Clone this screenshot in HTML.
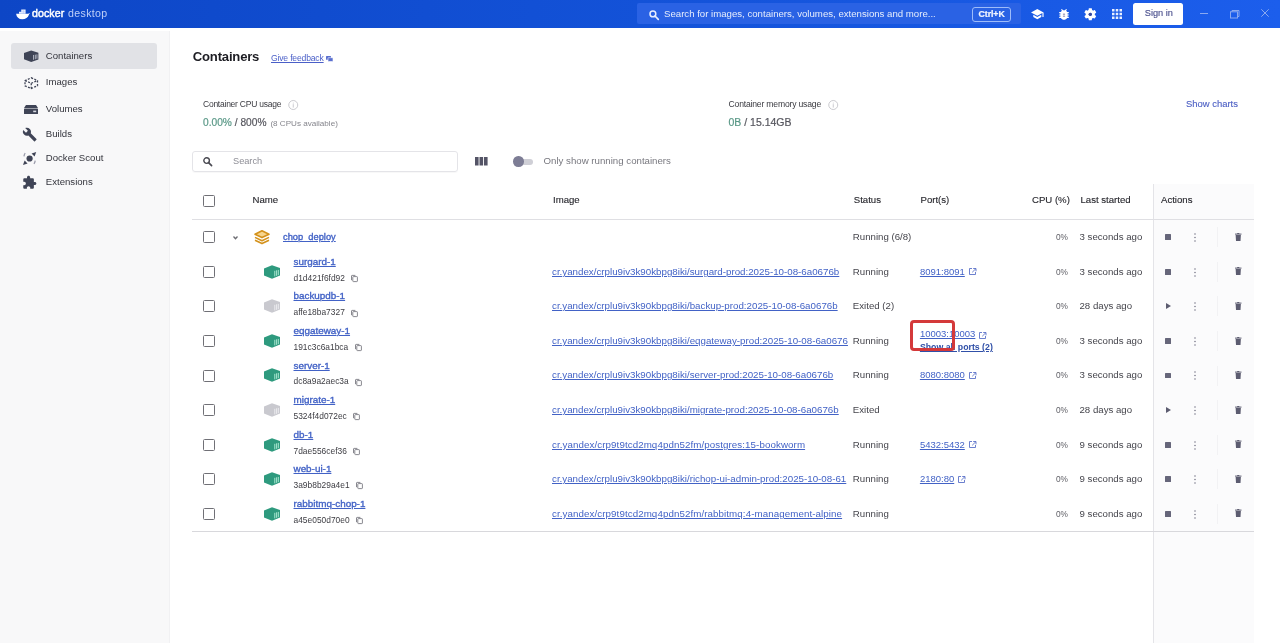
<!DOCTYPE html><html><head><meta charset="utf-8"><title>Docker Desktop</title><style>
*{box-sizing:border-box;margin:0;padding:0}
html,body{width:1280px;height:643px;overflow:hidden;background:#fff;font-family:"Liberation Sans",sans-serif;color:#17171c}
#root{position:absolute;left:0;top:0;width:1280px;height:643px;overflow:hidden;will-change:transform}
.t{position:absolute;white-space:nowrap}
.a{position:absolute}
svg{position:absolute;overflow:visible}
#top{position:absolute;left:0;top:0;width:1280px;height:28px;background:linear-gradient(90deg,#0d46c6 0%,#1352d8 50%,#1c5eec 100%)}
#side{position:absolute;left:0;top:31px;width:170px;height:612px;background:#f8f8f9;border-right:1px solid #f1f1f3}
.sel{position:absolute;left:11px;top:43px;width:146px;height:26px;border-radius:3px;background:#e1e2e6}
.lnk{color:#4262c6;text-decoration:underline;text-decoration-thickness:1px;text-underline-offset:1px}
.med{-webkit-text-stroke:0.12px currentColor}
.bld{-webkit-text-stroke:0.35px currentColor}
.cb{position:absolute;left:203px;width:12px;height:12px;border:1.2px solid #707076;border-radius:1.5px}
</style></head><body><div id="root">
<div id="top"></div>
<svg style="left:16px;top:8.5px" width="14" height="10.5" viewBox="0 0 14 10.5"><path d="M0.1 4.8 H12.4 C12.9 4.1 13.5 3.9 14 4.1 C13.5 4.6 13.2 5.2 12.9 5.8 C12 8.7 9.6 10.3 6.2 10.3 C2.8 10.3 0.6 8.4 0.1 4.8 Z" fill="#fff"/><path d="M3 4.8 V2.8 H5.2 V0.6 H9.6 V4.8 Z" fill="#e6eeff"/><path d="M5.2 2.8 H9.6 M7.4 0.6 V4.8" stroke="#9fb8f0" stroke-width="0.35"/></svg>
<div class="t" style="left:32.00px;top:8.00px;font-size:10.6px;line-height:10.6px;color:#fff;letter-spacing:0.08px;-webkit-text-stroke:0.45px #fff">docker</div>
<div class="t" style="left:68.00px;top:8.00px;font-size:10.6px;line-height:10.6px;color:#bfd0f8;letter-spacing:0.35px">desktop</div>
<div class="a" style="left:637px;top:3px;width:384px;height:21px;background:#2a62e4;border-radius:2px"></div>
<svg style="left:649px;top:10px" width="10" height="10" viewBox="0 0 10 10"><circle cx="3.9" cy="3.9" r="2.9" fill="none" stroke="#e8efff" stroke-width="1.5"/><path d="M6 6 L9.3 9.3" stroke="#e8efff" stroke-width="1.7" stroke-linecap="round"/></svg>
<div class="t" style="left:664.00px;top:9.00px;font-size:9.63px;line-height:9.63px;color:#e6edfc">Search for images, containers, volumes, extensions and more...</div>
<div class="a" style="left:972px;top:6.5px;width:39px;height:15px;border:1.4px solid #9dbcfa;border-radius:3px"></div>
<div class="t" style="left:978.60px;top:10.00px;font-size:8.8px;line-height:8.8px;font-weight:bold;color:#f2f6ff;letter-spacing:-0.1px;-webkit-text-stroke:0.2px #f2f6ff">Ctrl+K</div>
<svg style="left:1031px;top:8.5px" width="12.6" height="10.4" viewBox="1 3 22 18.2"><path fill="#fff" d="M5 13.18v4L12 21l7-3.82v-4L12 17l-7-3.82zM12 3L1 9l11 6 9-4.91V17h2V9L12 3z"/></svg>
<svg style="left:1058.5px;top:8.8px" width="10" height="10.8" viewBox="4 3 16 18"><path fill="#fff" d="M20 8h-2.81c-.45-.78-1.07-1.45-1.82-1.96L17 4.41 15.59 3l-2.17 2.17C12.96 5.06 12.49 5 12 5c-.49 0-.96.06-1.41.17L8.41 3 7 4.41l1.62 1.630C7.880 6.55 7.26 7.22 6.81 8H4v2h2.09c-.05.33-.09.66-.09 1v1H4v2h2v1c0 .34.04.67.09 1H4v2h2.81c1.04 1.79 2.970 3 5.19 3s4.15-1.21 5.19-3H20v-2h-2.09c.05-.33.09-.66.09-1v-1h2v-2h-2v-1c0-.34-.04-.67-.09-1H20V8z"/><path fill="#5a5a8a" d="M10.2 14.2h3.6v1.3h-3.6zM10.2 10.8h3.6v1.3h-3.6z"/></svg>
<svg style="left:1084.2px;top:7.6px" width="12.6" height="12.6" viewBox="2 2 20 20"><path fill="#fff" d="M19.14 12.94c.04-.3.06-.61.06-.94 0-.32-.02-.64-.07-.94l2.030-1.58c.18-.14.23-.41.12-.61l-1.92-3.32c-.12-.22-.37-.29-.59-.22l-2.39.96c-.5-.38-1.03-.7-1.62-.94l-.36-2.54c-.04-.24-.24-.41-.48-.41h-3.84c-.24 0-.43.17-.47.41l-.36 2.54c-.59.24-1.13.57-1.62.94l-2.39-.96c-.22-.08-.47 0-.59.22L2.74 8.87c-.12.21-.08.47.12.61l2.03 1.58c-.05.3-.09.63-.09.94s.02.64.07.94l-2.03 1.58c-.18.14-.23.41-.12.61l1.92 3.32c.12.22.37.29.59.22l2.39-.96c.5.38 1.03.7 1.62.94l.36 2.54c.05.24.24.41.48.41h3.84c.24 0 .44-.17.47-.41l.36-2.54c.59-.24 1.13-.56 1.62-.94l2.39.96c.22.08.47 0 .59-.22l1.92-3.32c.12-.22.07-.47-.12-.61l-2.01-1.58zM12 14.6c-1.43 0-2.6-1.17-2.6-2.6s1.17-2.6 2.6-2.6 2.6 1.17 2.6 2.6-1.17 2.6-2.6 2.6z"/><circle cx="12" cy="12" r="2.6" fill="#3a4a9a"/></svg>
<svg style="left:1112.2px;top:8.8px" width="10" height="10" viewBox="4 4 16 16"><path fill="#e8efff" d="M4 8h4V4H4v4zm6 12h4v-4h-4v4zm-6 0h4v-4H4v4zm0-6h4v-4H4v4zm6 0h4v-4h-4v4zm6-10v4h4V4h-4zm-6 4h4V4h-4v4zm6 6h4v-4h-4v4zm0 6h4v-4h-4v4z"/></svg>
<div class="a" style="left:1133px;top:3px;width:50px;height:21.5px;background:#fff;border-radius:2.5px"></div>
<div class="t" style="left:1144.80px;top:9.00px;font-size:9.2px;line-height:9.2px;color:#4d528f;-webkit-text-stroke:0.15px #4d528f">Sign in</div>
<div class="a" style="left:1200px;top:13px;width:7.5px;height:1px;background:#8aa9f0"></div>
<svg style="left:1230px;top:9.5px" width="9.5" height="8.5" viewBox="0 0 9.5 8.5"><rect x="0.5" y="1.8" width="7" height="6.2" fill="none" stroke="#8aa9f0" stroke-width="1"/><path d="M2 1.8 V0.5 H9 V6.5 H7.5" fill="none" stroke="#8aa9f0" stroke-width="1"/></svg>
<svg style="left:1261px;top:9px" width="8" height="8" viewBox="0 0 8 8"><path d="M0.3 0.3 L7.7 7.7 M7.7 0.3 L0.3 7.7" stroke="#8aa9f0" stroke-width="1"/></svg>
<div id="side"></div>
<div class="sel"></div>
<div class="t" style="left:45.80px;top:51.00px;font-size:9.6px;line-height:9.6px;color:#33343c">Containers</div>
<div class="t" style="left:45.80px;top:77.00px;font-size:9.6px;line-height:9.6px;color:#33343c">Images</div>
<div class="t" style="left:45.80px;top:104.00px;font-size:9.6px;line-height:9.6px;color:#33343c">Volumes</div>
<div class="t" style="left:45.80px;top:129.00px;font-size:9.6px;line-height:9.6px;color:#33343c">Builds</div>
<div class="t" style="left:45.80px;top:153.00px;font-size:9.6px;line-height:9.6px;color:#33343c">Docker Scout</div>
<div class="t" style="left:45.80px;top:177.00px;font-size:9.6px;line-height:9.6px;color:#33343c">Extensions</div>
<svg style="left:23.6px;top:50px" width="14.4" height="12" viewBox="0 0 16 13.3"><path d="M0 3.4 L8 0.4 L16 3 V10.5 L8 13.3 L0 10.4 Z" fill="#3f4456"/><path d="M10.6 5.5 V10.8 M12.6 5.2 V10.2 M14.4 4.8 V9.7" stroke="#c8cbd6" stroke-width="0.9"/></svg>
<svg style="left:23.6px;top:76.5px" width="14.5" height="12.2" viewBox="0 0 14.5 12.2"><path d="M7.25 0.8 L13.5 3.6 V8.8 L7.25 11.5 L1 8.8 V3.6 Z M1 3.6 L7.25 6.3 L13.5 3.6 M7.25 6.3 V11.5" fill="none" stroke="#3f4456" stroke-width="1.3" stroke-dasharray="2 1.4"/></svg>
<svg style="left:23.6px;top:104.7px" width="14" height="9" viewBox="0 0 14 9"><path d="M2 0 H12 L14 3 H0 Z" fill="#3f4456"/><rect x="0" y="3.6" width="14" height="5.4" rx="0.6" fill="#3f4456"/><rect x="9.2" y="5.6" width="3" height="1.6" fill="#d8dae2"/></svg>
<svg style="left:21.5px;top:127px" width="15.5" height="15" viewBox="0 0 24 24"><path fill="#3f4456" d="M22.7 19l-9.1-9.1c.9-2.3.4-5-1.5-6.9-2-2-5-2.4-7.4-1.3L9 6 6 9 1.6 4.7C.4 7.1.9 10.1 2.9 12.1c1.9 1.9 4.6 2.4 6.9 1.5l9.1 9.1c.4.4 1 .4 1.4 0l2.3-2.3c.5-.4.5-1.1.1-1.4z"/></svg>
<svg style="left:22.7px;top:152px" width="13.2" height="13" viewBox="0 0 13.2 13"><circle cx="6.6" cy="6.5" r="3.1" fill="#3f4456"/><path d="M13.2 0 L8.6 1.6 L11.6 4.6 Z" fill="#3f4456"/><path d="M0 13 L4.6 11.4 L1.6 8.4 Z" fill="#3f4456"/><path d="M2.2 1.2 A6 6 0 0 0 1 4.4" stroke="#9a9cab" stroke-width="1.3" fill="none"/><path d="M11 11.8 A6 6 0 0 0 12.2 8.6" stroke="#9a9cab" stroke-width="1.3" fill="none"/></svg>
<svg style="left:22px;top:174.5px" width="15" height="15" viewBox="0 0 24 24"><path fill="#3f4456" d="M20.5 11H19V7c0-1.1-.9-2-2-2h-4V3.5C13 2.12 11.88 1 10.5 1S8 2.12 8 3.5V5H4c-1.1 0-1.99.9-1.99 2v3.8H3.5c1.49 0 2.7 1.21 2.7 2.7s-1.21 2.7-2.7 2.7H2V20c0 1.1.9 2 2 2h3.8v-1.5c0-1.49 1.21-2.7 2.7-2.7 1.49 0 2.7 1.21 2.7 2.7V22H17c1.1 0 2-.9 2-2v-4h1.5c1.38 0 2.5-1.12 2.5-2.5S21.88 11 20.5 11z"/></svg>
<div class="t" style="left:192.80px;top:50.00px;font-size:13.1px;line-height:13.1px;font-weight:bold;color:#1c1c22;letter-spacing:-0.2px">Containers</div>
<div class="t" style="left:271.00px;top:54.00px;font-size:8.6px;line-height:8.6px;color:#4a5fc8;letter-spacing:-0.18px;text-decoration:underline;text-underline-offset:0.5px">Give feedback</div>
<svg style="left:326px;top:55.5px" width="7" height="5.5" viewBox="0 0 7 5.5"><rect x="0" y="0" width="5" height="3.8" rx="0.5" fill="#5a6fcf"/><rect x="2" y="1.7" width="5" height="3.8" rx="0.5" fill="#5a6fcf" stroke="#fff" stroke-width="0.6"/></svg>
<div class="t" style="left:203.00px;top:100.00px;font-size:8.5px;line-height:8.5px;color:#3a3a40;letter-spacing:-0.24px">Container CPU usage</div>
<svg style="left:288px;top:100px" width="10.5" height="10" viewBox="0 0 10.5 10"><circle cx="5.25" cy="5" r="4.5" fill="none" stroke="#c4c4ca" stroke-width="0.9"/><path d="M5.25 4.2 V7.6" stroke="#c4c4ca" stroke-width="0.9"/><circle cx="5.25" cy="2.9" r="0.5" fill="#c4c4ca"/></svg>
<div class="t" style="left:203.00px;top:118.00px;font-size:10.2px;line-height:10.2px;color:#56565e;-webkit-text-stroke:0.2px currentColor"><span style="color:#5a9887">0.00%</span> / 800%</div>
<div class="t" style="left:270.40px;top:120.00px;font-size:8.1px;line-height:8.1px;color:#85858c">(8 CPUs available)</div>
<div class="t" style="left:728.50px;top:100.00px;font-size:8.6px;line-height:8.6px;color:#3a3a40;letter-spacing:-0.18px">Container memory usage</div>
<svg style="left:828px;top:99.5px" width="10.5" height="10" viewBox="0 0 10.5 10"><circle cx="5.25" cy="5" r="4.5" fill="none" stroke="#c4c4ca" stroke-width="0.9"/><path d="M5.25 4.2 V7.6" stroke="#c4c4ca" stroke-width="0.9"/><circle cx="5.25" cy="2.9" r="0.5" fill="#c4c4ca"/></svg>
<div class="t" style="left:728.50px;top:117.00px;font-size:10.5px;line-height:10.5px;color:#56565e;-webkit-text-stroke:0.2px currentColor"><span style="color:#5a9887">0B</span> / 15.14GB</div>
<div class="a t med" style="left:1186.00px;top:99.00px;font-size:9.45px;line-height:9.45px;color:#4d60c4">Show charts</div>
<div class="a" style="left:192px;top:150.5px;width:266px;height:21.5px;border:1px solid #e4e4e8;border-radius:3px;box-shadow:0 1px 1px rgba(0,0,0,0.03)"></div>
<svg style="left:203px;top:157px" width="10" height="9" viewBox="0 0 10 9"><circle cx="3.6" cy="3.6" r="2.8" fill="none" stroke="#4a4a52" stroke-width="1.4"/><path d="M5.6 5.6 L8.6 8.6" stroke="#4a4a52" stroke-width="1.6" stroke-linecap="round"/></svg>
<div class="t" style="left:233.00px;top:157.00px;font-size:9.2px;line-height:9.2px;color:#8d8d95">Search</div>
<svg style="left:475.4px;top:157.2px" width="12.6" height="8.5" viewBox="0 0 12.6 8.5"><rect x="0" y="0" width="3.6" height="8.5" fill="#545466"/><rect x="4.5" y="0" width="3.6" height="8.5" fill="#545466"/><rect x="9" y="0" width="3.6" height="8.5" fill="#545466"/></svg>
<div class="a" style="left:515px;top:158.5px;width:18px;height:6px;border-radius:3px;background:#cfcfd6"></div>
<div class="a" style="left:513.4px;top:156.3px;width:10.4px;height:10.4px;border-radius:50%;background:#7d7d95"></div>
<div class="t" style="left:543.50px;top:156.00px;font-size:9.68px;line-height:9.68px;color:#78787f">Only show running containers</div>
<div class="a" style="left:1153px;top:184px;width:101px;height:459px;background:#fbfbfc;border-left:1px solid #e4e4e8"></div>
<div class="a" style="left:192px;top:219px;width:1062px;height:1px;background:#dfdfe3"></div>
<div class="a" style="left:192px;top:531px;width:1062px;height:1px;background:#d8d8dc"></div>
<div class="cb" style="top:194.7px"></div>
<div class="a t med" style="left:252.60px;top:195.00px;font-size:9.6px;line-height:9.6px;color:#26262c">Name</div>
<div class="a t med" style="left:553.00px;top:195.00px;font-size:9.6px;line-height:9.6px;color:#26262c">Image</div>
<div class="a t med" style="left:853.80px;top:195.00px;font-size:9.6px;line-height:9.6px;color:#26262c">Status</div>
<div class="a t med" style="left:920.50px;top:195.00px;font-size:9.6px;line-height:9.6px;color:#26262c">Port(s)</div>
<div class="a t med" style="left:1032.00px;top:195.00px;font-size:9.6px;line-height:9.6px;color:#26262c">CPU (%)</div>
<div class="a t med" style="left:1080.50px;top:195.00px;font-size:9.6px;line-height:9.6px;color:#26262c">Last started</div>
<div class="a t med" style="left:1161.00px;top:195.00px;font-size:9.6px;line-height:9.6px;color:#26262c">Actions</div>
<div class="cb" style="top:231.28px"></div>
<svg style="left:233px;top:235.59px" width="5" height="3.4" viewBox="0 0 5 3.4"><path d="M0.5 0.5 L2.5 2.7 L4.5 0.5" fill="none" stroke="#6c6c72" stroke-width="1.3"/></svg>
<svg style="left:253.5px;top:229.59px" width="16" height="14.2" viewBox="0 0 16 14.2"><path d="M8 0.8 L15 4.2 L8 7.6 L1 4.2 Z" fill="#f7d58d" stroke="#d4921c" stroke-width="1.6" stroke-linejoin="round"/><path d="M1 7.4 L8 10.8 L15 7.4" fill="none" stroke="#d4921c" stroke-width="1.6" stroke-linejoin="round"/><path d="M1 10.3 L8 13.6 L15 10.3" fill="none" stroke="#d4921c" stroke-width="1.6" stroke-linejoin="round"/></svg>
<div class="a t lnk bld" style="left:283.00px;top:233.00px;font-size:9.3px;line-height:9.3px;">chop_deploy</div>
<div class="t" style="left:852.80px;top:232.00px;font-size:9.66px;line-height:9.66px;color:#45454c">Running (6/8)</div>
<div class="t" style="left:1056.20px;top:232.00px;font-size:9.66px;line-height:9.66px;color:#5e5e65;transform:scaleX(0.86);transform-origin:0 0">0%</div>
<div class="t" style="left:1079.50px;top:232.00px;font-size:9.66px;line-height:9.66px;color:#45454c">3 seconds ago</div>
<div class="a" style="left:1165.2px;top:234.48px;width:5.6px;height:5.6px;background:#66667a;border-radius:0.5px"></div>
<svg style="left:1193.6px;top:233.09px" width="2" height="9" viewBox="0 0 2 9"><circle cx="1" cy="1" r="0.75" fill="#707082"/><circle cx="1" cy="4.5" r="0.75" fill="#707082"/><circle cx="1" cy="8" r="0.75" fill="#707082"/></svg>
<div class="a" style="left:1216.5px;top:227.28px;width:1px;height:20px;background:#f2f2f4"></div>
<svg style="left:1235px;top:232.88px" width="6.5" height="8" viewBox="0 0 6.5 8"><rect x="0" y="0.6" width="6.5" height="1" fill="#5c5c70"/><rect x="2.2" y="0" width="2.1" height="1" fill="#5c5c70"/><path d="M0.6 2 H5.9 L5.5 8 H1 Z" fill="#5c5c70"/></svg>
<div class="cb" style="top:265.86px"></div>
<svg style="left:264px;top:264.75px" width="16" height="14" viewBox="0 0 16 14"><path d="M0 3.4 L8 0.2 L16 3 V10.6 L8 13.8 L0 10.6 Z" fill="#2e9a7e"/><path d="M10.8 5.8 V11.4 M12.6 5.3 V10.8 M14.3 4.9 V10.2" stroke="#b6efd9" stroke-width="0.9"/></svg>
<div class="a t lnk bld" style="left:293.50px;top:257.00px;font-size:9.9px;line-height:9.9px;">surgard-1</div>
<div class="t" style="left:293.50px;top:274.00px;font-size:8.4px;line-height:8.4px;color:#3c3c42;letter-spacing:0.02px">d1d421f6fd92</div>
<svg style="left:351.32px;top:275.06px" width="7" height="7" viewBox="0 0 7 7"><rect x="1.8" y="1.6" width="4.6" height="5" rx="0.6" fill="none" stroke="#7b7b82" stroke-width="0.9"/><path d="M0.5 5.2 V1 Q0.5 0.4 1.1 0.4 H4.4" fill="none" stroke="#7b7b82" stroke-width="0.9"/></svg>
<div class="a t lnk" style="left:552.00px;top:267.00px;font-size:9.76px;line-height:9.76px;width:296px;overflow:hidden">cr.yandex/crplu9iv3k90kbpg8iki/surgard-prod:2025-10-08-6a0676b</div>
<div class="t" style="left:852.80px;top:267.00px;font-size:9.66px;line-height:9.66px;color:#45454c">Running</div>
<div class="a t lnk" style="left:919.90px;top:267.00px;font-size:9.5px;line-height:9.5px;">8091:8091</div>
<svg style="left:968.81px;top:268.36px" width="7.5" height="7" viewBox="0 0 7.5 7"><path d="M3 0.5 H0.5 V6.5 H6.5 V4" fill="none" stroke="#5b72c8" stroke-width="0.9"/><path d="M4.2 0.5 H7 V3.3 M7 0.5 L3.2 4.3" fill="none" stroke="#5b72c8" stroke-width="0.9"/></svg>
<div class="t" style="left:1056.20px;top:267.00px;font-size:9.66px;line-height:9.66px;color:#5e5e65;transform:scaleX(0.86);transform-origin:0 0">0%</div>
<div class="t" style="left:1079.50px;top:267.00px;font-size:9.66px;line-height:9.66px;color:#45454c">3 seconds ago</div>
<div class="a" style="left:1165.2px;top:269.06px;width:5.6px;height:5.6px;background:#66667a;border-radius:0.5px"></div>
<svg style="left:1193.6px;top:267.66px" width="2" height="9" viewBox="0 0 2 9"><circle cx="1" cy="1" r="0.75" fill="#707082"/><circle cx="1" cy="4.5" r="0.75" fill="#707082"/><circle cx="1" cy="8" r="0.75" fill="#707082"/></svg>
<div class="a" style="left:1216.5px;top:261.86px;width:1px;height:20px;background:#f2f2f4"></div>
<svg style="left:1235px;top:267.46px" width="6.5" height="8" viewBox="0 0 6.5 8"><rect x="0" y="0.6" width="6.5" height="1" fill="#5c5c70"/><rect x="2.2" y="0" width="2.1" height="1" fill="#5c5c70"/><path d="M0.6 2 H5.9 L5.5 8 H1 Z" fill="#5c5c70"/></svg>
<div class="cb" style="top:300.43px"></div>
<svg style="left:264px;top:299.32px" width="16" height="14" viewBox="0 0 16 14"><path d="M0 3.4 L8 0.2 L16 3 V10.6 L8 13.8 L0 10.6 Z" fill="#c9c9cf"/><path d="M10.8 5.8 V11.4 M12.6 5.3 V10.8 M14.3 4.9 V10.2" stroke="#f0f0f3" stroke-width="0.9"/></svg>
<div class="a t lnk bld" style="left:293.50px;top:291.00px;font-size:9.9px;line-height:9.9px;">backupdb-1</div>
<div class="t" style="left:293.50px;top:308.00px;font-size:8.4px;line-height:8.4px;color:#3c3c42;letter-spacing:0.02px">affe18ba7327</div>
<svg style="left:351.17px;top:309.62px" width="7" height="7" viewBox="0 0 7 7"><rect x="1.8" y="1.6" width="4.6" height="5" rx="0.6" fill="none" stroke="#7b7b82" stroke-width="0.9"/><path d="M0.5 5.2 V1 Q0.5 0.4 1.1 0.4 H4.4" fill="none" stroke="#7b7b82" stroke-width="0.9"/></svg>
<div class="a t lnk" style="left:552.00px;top:301.00px;font-size:9.76px;line-height:9.76px;width:296px;overflow:hidden">cr.yandex/crplu9iv3k90kbpg8iki/backup-prod:2025-10-08-6a0676b</div>
<div class="t" style="left:852.80px;top:301.00px;font-size:9.66px;line-height:9.66px;color:#45454c">Exited (2)</div>
<div class="t" style="left:1056.20px;top:301.00px;font-size:9.66px;line-height:9.66px;color:#5e5e65;transform:scaleX(0.86);transform-origin:0 0">0%</div>
<div class="t" style="left:1079.50px;top:301.00px;font-size:9.66px;line-height:9.66px;color:#45454c">28 days ago</div>
<svg style="left:1166px;top:303.43px" width="5" height="6" viewBox="0 0 5 6"><path d="M0 0 L5 3 L0 6 Z" fill="#5c5c70"/></svg>
<svg style="left:1193.6px;top:302.23px" width="2" height="9" viewBox="0 0 2 9"><circle cx="1" cy="1" r="0.75" fill="#707082"/><circle cx="1" cy="4.5" r="0.75" fill="#707082"/><circle cx="1" cy="8" r="0.75" fill="#707082"/></svg>
<div class="a" style="left:1216.5px;top:296.43px;width:1px;height:20px;background:#f2f2f4"></div>
<svg style="left:1235px;top:302.03px" width="6.5" height="8" viewBox="0 0 6.5 8"><rect x="0" y="0.6" width="6.5" height="1" fill="#5c5c70"/><rect x="2.2" y="0" width="2.1" height="1" fill="#5c5c70"/><path d="M0.6 2 H5.9 L5.5 8 H1 Z" fill="#5c5c70"/></svg>
<div class="cb" style="top:335.00px"></div>
<svg style="left:264px;top:333.9px" width="16" height="14" viewBox="0 0 16 14"><path d="M0 3.4 L8 0.2 L16 3 V10.6 L8 13.8 L0 10.6 Z" fill="#2e9a7e"/><path d="M10.8 5.8 V11.4 M12.6 5.3 V10.8 M14.3 4.9 V10.2" stroke="#b6efd9" stroke-width="0.9"/></svg>
<div class="a t lnk bld" style="left:293.50px;top:326.00px;font-size:9.9px;line-height:9.9px;">eqgateway-1</div>
<div class="t" style="left:293.50px;top:343.00px;font-size:8.4px;line-height:8.4px;color:#3c3c42;letter-spacing:0.02px">191c3c6a1bca</div>
<svg style="left:354.59px;top:344.2px" width="7" height="7" viewBox="0 0 7 7"><rect x="1.8" y="1.6" width="4.6" height="5" rx="0.6" fill="none" stroke="#7b7b82" stroke-width="0.9"/><path d="M0.5 5.2 V1 Q0.5 0.4 1.1 0.4 H4.4" fill="none" stroke="#7b7b82" stroke-width="0.9"/></svg>
<div class="a t lnk" style="left:552.00px;top:336.00px;font-size:9.76px;line-height:9.76px;width:296px;overflow:hidden">cr.yandex/crplu9iv3k90kbpg8iki/eqgateway-prod:2025-10-08-6a0676</div>
<div class="t" style="left:852.80px;top:336.00px;font-size:9.66px;line-height:9.66px;color:#45454c">Running</div>
<div class="a t lnk" style="left:919.90px;top:329.00px;font-size:9.5px;line-height:9.5px;">10003:10003</div>
<div class="a t lnk" style="left:919.90px;top:343.00px;font-size:8.76px;line-height:8.76px;font-weight:bold;color:#3050a8">Show all ports (2)</div>
<svg style="left:979.3px;top:331.6px" width="7.5" height="7" viewBox="0 0 7.5 7"><path d="M3 0.5 H0.5 V6.5 H6.5 V4" fill="none" stroke="#5b72c8" stroke-width="0.9"/><path d="M4.2 0.5 H7 V3.3 M7 0.5 L3.2 4.3" fill="none" stroke="#5b72c8" stroke-width="0.9"/></svg>
<div class="t" style="left:1056.20px;top:336.00px;font-size:9.66px;line-height:9.66px;color:#5e5e65;transform:scaleX(0.86);transform-origin:0 0">0%</div>
<div class="t" style="left:1079.50px;top:336.00px;font-size:9.66px;line-height:9.66px;color:#45454c">3 seconds ago</div>
<div class="a" style="left:1165.2px;top:338.20px;width:5.6px;height:5.6px;background:#66667a;border-radius:0.5px"></div>
<svg style="left:1193.6px;top:336.80px" width="2" height="9" viewBox="0 0 2 9"><circle cx="1" cy="1" r="0.75" fill="#707082"/><circle cx="1" cy="4.5" r="0.75" fill="#707082"/><circle cx="1" cy="8" r="0.75" fill="#707082"/></svg>
<div class="a" style="left:1216.5px;top:331.00px;width:1px;height:20px;background:#f2f2f4"></div>
<svg style="left:1235px;top:336.60px" width="6.5" height="8" viewBox="0 0 6.5 8"><rect x="0" y="0.6" width="6.5" height="1" fill="#5c5c70"/><rect x="2.2" y="0" width="2.1" height="1" fill="#5c5c70"/><path d="M0.6 2 H5.9 L5.5 8 H1 Z" fill="#5c5c70"/></svg>
<div class="cb" style="top:369.56px"></div>
<svg style="left:264px;top:368.46px" width="16" height="14" viewBox="0 0 16 14"><path d="M0 3.4 L8 0.2 L16 3 V10.6 L8 13.8 L0 10.6 Z" fill="#2e9a7e"/><path d="M10.8 5.8 V11.4 M12.6 5.3 V10.8 M14.3 4.9 V10.2" stroke="#b6efd9" stroke-width="0.9"/></svg>
<div class="a t lnk bld" style="left:293.50px;top:361.00px;font-size:9.9px;line-height:9.9px;">server-1</div>
<div class="t" style="left:293.50px;top:377.00px;font-size:8.4px;line-height:8.4px;color:#3c3c42;letter-spacing:0.02px">dc8a9a2aec3a</div>
<svg style="left:355.06px;top:378.76px" width="7" height="7" viewBox="0 0 7 7"><rect x="1.8" y="1.6" width="4.6" height="5" rx="0.6" fill="none" stroke="#7b7b82" stroke-width="0.9"/><path d="M0.5 5.2 V1 Q0.5 0.4 1.1 0.4 H4.4" fill="none" stroke="#7b7b82" stroke-width="0.9"/></svg>
<div class="a t lnk" style="left:552.00px;top:370.00px;font-size:9.76px;line-height:9.76px;width:296px;overflow:hidden">cr.yandex/crplu9iv3k90kbpg8iki/server-prod:2025-10-08-6a0676b</div>
<div class="t" style="left:852.80px;top:370.00px;font-size:9.66px;line-height:9.66px;color:#45454c">Running</div>
<div class="a t lnk" style="left:919.90px;top:370.00px;font-size:9.5px;line-height:9.5px;">8080:8080</div>
<svg style="left:968.81px;top:372.06px" width="7.5" height="7" viewBox="0 0 7.5 7"><path d="M3 0.5 H0.5 V6.5 H6.5 V4" fill="none" stroke="#5b72c8" stroke-width="0.9"/><path d="M4.2 0.5 H7 V3.3 M7 0.5 L3.2 4.3" fill="none" stroke="#5b72c8" stroke-width="0.9"/></svg>
<div class="t" style="left:1056.20px;top:370.00px;font-size:9.66px;line-height:9.66px;color:#5e5e65;transform:scaleX(0.86);transform-origin:0 0">0%</div>
<div class="t" style="left:1079.50px;top:370.00px;font-size:9.66px;line-height:9.66px;color:#45454c">3 seconds ago</div>
<div class="a" style="left:1165.2px;top:372.76px;width:5.6px;height:5.6px;background:#66667a;border-radius:0.5px"></div>
<svg style="left:1193.6px;top:371.37px" width="2" height="9" viewBox="0 0 2 9"><circle cx="1" cy="1" r="0.75" fill="#707082"/><circle cx="1" cy="4.5" r="0.75" fill="#707082"/><circle cx="1" cy="8" r="0.75" fill="#707082"/></svg>
<div class="a" style="left:1216.5px;top:365.56px;width:1px;height:20px;background:#f2f2f4"></div>
<svg style="left:1235px;top:371.17px" width="6.5" height="8" viewBox="0 0 6.5 8"><rect x="0" y="0.6" width="6.5" height="1" fill="#5c5c70"/><rect x="2.2" y="0" width="2.1" height="1" fill="#5c5c70"/><path d="M0.6 2 H5.9 L5.5 8 H1 Z" fill="#5c5c70"/></svg>
<div class="cb" style="top:404.14px"></div>
<svg style="left:264px;top:403.04px" width="16" height="14" viewBox="0 0 16 14"><path d="M0 3.4 L8 0.2 L16 3 V10.6 L8 13.8 L0 10.6 Z" fill="#c9c9cf"/><path d="M10.8 5.8 V11.4 M12.6 5.3 V10.8 M14.3 4.9 V10.2" stroke="#f0f0f3" stroke-width="0.9"/></svg>
<div class="a t lnk bld" style="left:293.50px;top:395.00px;font-size:9.9px;line-height:9.9px;">migrate-1</div>
<div class="t" style="left:293.50px;top:412.00px;font-size:8.4px;line-height:8.4px;color:#3c3c42;letter-spacing:0.02px">5324f4d072ec</div>
<svg style="left:353.19px;top:413.34px" width="7" height="7" viewBox="0 0 7 7"><rect x="1.8" y="1.6" width="4.6" height="5" rx="0.6" fill="none" stroke="#7b7b82" stroke-width="0.9"/><path d="M0.5 5.2 V1 Q0.5 0.4 1.1 0.4 H4.4" fill="none" stroke="#7b7b82" stroke-width="0.9"/></svg>
<div class="a t lnk" style="left:552.00px;top:405.00px;font-size:9.76px;line-height:9.76px;width:296px;overflow:hidden">cr.yandex/crplu9iv3k90kbpg8iki/migrate-prod:2025-10-08-6a0676b</div>
<div class="t" style="left:852.80px;top:405.00px;font-size:9.66px;line-height:9.66px;color:#45454c">Exited</div>
<div class="t" style="left:1056.20px;top:405.00px;font-size:9.66px;line-height:9.66px;color:#5e5e65;transform:scaleX(0.86);transform-origin:0 0">0%</div>
<div class="t" style="left:1079.50px;top:405.00px;font-size:9.66px;line-height:9.66px;color:#45454c">28 days ago</div>
<svg style="left:1166px;top:407.14px" width="5" height="6" viewBox="0 0 5 6"><path d="M0 0 L5 3 L0 6 Z" fill="#5c5c70"/></svg>
<svg style="left:1193.6px;top:405.94px" width="2" height="9" viewBox="0 0 2 9"><circle cx="1" cy="1" r="0.75" fill="#707082"/><circle cx="1" cy="4.5" r="0.75" fill="#707082"/><circle cx="1" cy="8" r="0.75" fill="#707082"/></svg>
<div class="a" style="left:1216.5px;top:400.14px;width:1px;height:20px;background:#f2f2f4"></div>
<svg style="left:1235px;top:405.74px" width="6.5" height="8" viewBox="0 0 6.5 8"><rect x="0" y="0.6" width="6.5" height="1" fill="#5c5c70"/><rect x="2.2" y="0" width="2.1" height="1" fill="#5c5c70"/><path d="M0.6 2 H5.9 L5.5 8 H1 Z" fill="#5c5c70"/></svg>
<div class="cb" style="top:438.71px"></div>
<svg style="left:264px;top:437.61px" width="16" height="14" viewBox="0 0 16 14"><path d="M0 3.4 L8 0.2 L16 3 V10.6 L8 13.8 L0 10.6 Z" fill="#2e9a7e"/><path d="M10.8 5.8 V11.4 M12.6 5.3 V10.8 M14.3 4.9 V10.2" stroke="#b6efd9" stroke-width="0.9"/></svg>
<div class="a t lnk bld" style="left:293.50px;top:430.00px;font-size:9.9px;line-height:9.9px;">db-1</div>
<div class="t" style="left:293.50px;top:447.00px;font-size:8.4px;line-height:8.4px;color:#3c3c42;letter-spacing:0.02px">7dae556cef36</div>
<svg style="left:353.19px;top:447.91px" width="7" height="7" viewBox="0 0 7 7"><rect x="1.8" y="1.6" width="4.6" height="5" rx="0.6" fill="none" stroke="#7b7b82" stroke-width="0.9"/><path d="M0.5 5.2 V1 Q0.5 0.4 1.1 0.4 H4.4" fill="none" stroke="#7b7b82" stroke-width="0.9"/></svg>
<div class="a t lnk" style="left:552.00px;top:440.00px;font-size:9.76px;line-height:9.76px;letter-spacing:0.085px;width:296px;overflow:hidden">cr.yandex/crp9t9tcd2mq4pdn52fm/postgres:15-bookworm</div>
<div class="t" style="left:852.80px;top:440.00px;font-size:9.66px;line-height:9.66px;color:#45454c">Running</div>
<div class="a t lnk" style="left:919.90px;top:440.00px;font-size:9.5px;line-height:9.5px;">5432:5432</div>
<svg style="left:968.81px;top:441.21px" width="7.5" height="7" viewBox="0 0 7.5 7"><path d="M3 0.5 H0.5 V6.5 H6.5 V4" fill="none" stroke="#5b72c8" stroke-width="0.9"/><path d="M4.2 0.5 H7 V3.3 M7 0.5 L3.2 4.3" fill="none" stroke="#5b72c8" stroke-width="0.9"/></svg>
<div class="t" style="left:1056.20px;top:440.00px;font-size:9.66px;line-height:9.66px;color:#5e5e65;transform:scaleX(0.86);transform-origin:0 0">0%</div>
<div class="t" style="left:1079.50px;top:440.00px;font-size:9.66px;line-height:9.66px;color:#45454c">9 seconds ago</div>
<div class="a" style="left:1165.2px;top:441.91px;width:5.6px;height:5.6px;background:#66667a;border-radius:0.5px"></div>
<svg style="left:1193.6px;top:440.51px" width="2" height="9" viewBox="0 0 2 9"><circle cx="1" cy="1" r="0.75" fill="#707082"/><circle cx="1" cy="4.5" r="0.75" fill="#707082"/><circle cx="1" cy="8" r="0.75" fill="#707082"/></svg>
<div class="a" style="left:1216.5px;top:434.71px;width:1px;height:20px;background:#f2f2f4"></div>
<svg style="left:1235px;top:440.31px" width="6.5" height="8" viewBox="0 0 6.5 8"><rect x="0" y="0.6" width="6.5" height="1" fill="#5c5c70"/><rect x="2.2" y="0" width="2.1" height="1" fill="#5c5c70"/><path d="M0.6 2 H5.9 L5.5 8 H1 Z" fill="#5c5c70"/></svg>
<div class="cb" style="top:473.28px"></div>
<svg style="left:264px;top:472.18px" width="16" height="14" viewBox="0 0 16 14"><path d="M0 3.4 L8 0.2 L16 3 V10.6 L8 13.8 L0 10.6 Z" fill="#2e9a7e"/><path d="M10.8 5.8 V11.4 M12.6 5.3 V10.8 M14.3 4.9 V10.2" stroke="#b6efd9" stroke-width="0.9"/></svg>
<div class="a t lnk bld" style="left:293.50px;top:464.00px;font-size:9.9px;line-height:9.9px;">web-ui-1</div>
<div class="t" style="left:293.50px;top:481.00px;font-size:8.4px;line-height:8.4px;color:#3c3c42;letter-spacing:0.02px">3a9b8b29a4e1</div>
<svg style="left:356.0px;top:482.48px" width="7" height="7" viewBox="0 0 7 7"><rect x="1.8" y="1.6" width="4.6" height="5" rx="0.6" fill="none" stroke="#7b7b82" stroke-width="0.9"/><path d="M0.5 5.2 V1 Q0.5 0.4 1.1 0.4 H4.4" fill="none" stroke="#7b7b82" stroke-width="0.9"/></svg>
<div class="a t lnk" style="left:552.00px;top:474.00px;font-size:9.76px;line-height:9.76px;width:296px;overflow:hidden">cr.yandex/crplu9iv3k90kbpg8iki/richop-ui-admin-prod:2025-10-08-61</div>
<div class="t" style="left:852.80px;top:474.00px;font-size:9.66px;line-height:9.66px;color:#45454c">Running</div>
<div class="a t lnk" style="left:919.90px;top:474.00px;font-size:9.5px;line-height:9.5px;">2180:80</div>
<svg style="left:958.24px;top:475.78px" width="7.5" height="7" viewBox="0 0 7.5 7"><path d="M3 0.5 H0.5 V6.5 H6.5 V4" fill="none" stroke="#5b72c8" stroke-width="0.9"/><path d="M4.2 0.5 H7 V3.3 M7 0.5 L3.2 4.3" fill="none" stroke="#5b72c8" stroke-width="0.9"/></svg>
<div class="t" style="left:1056.20px;top:474.00px;font-size:9.66px;line-height:9.66px;color:#5e5e65;transform:scaleX(0.86);transform-origin:0 0">0%</div>
<div class="t" style="left:1079.50px;top:474.00px;font-size:9.66px;line-height:9.66px;color:#45454c">9 seconds ago</div>
<div class="a" style="left:1165.2px;top:476.48px;width:5.6px;height:5.6px;background:#66667a;border-radius:0.5px"></div>
<svg style="left:1193.6px;top:475.08px" width="2" height="9" viewBox="0 0 2 9"><circle cx="1" cy="1" r="0.75" fill="#707082"/><circle cx="1" cy="4.5" r="0.75" fill="#707082"/><circle cx="1" cy="8" r="0.75" fill="#707082"/></svg>
<div class="a" style="left:1216.5px;top:469.28px;width:1px;height:20px;background:#f2f2f4"></div>
<svg style="left:1235px;top:474.88px" width="6.5" height="8" viewBox="0 0 6.5 8"><rect x="0" y="0.6" width="6.5" height="1" fill="#5c5c70"/><rect x="2.2" y="0" width="2.1" height="1" fill="#5c5c70"/><path d="M0.6 2 H5.9 L5.5 8 H1 Z" fill="#5c5c70"/></svg>
<div class="cb" style="top:507.85px"></div>
<svg style="left:264px;top:506.75px" width="16" height="14" viewBox="0 0 16 14"><path d="M0 3.4 L8 0.2 L16 3 V10.6 L8 13.8 L0 10.6 Z" fill="#2e9a7e"/><path d="M10.8 5.8 V11.4 M12.6 5.3 V10.8 M14.3 4.9 V10.2" stroke="#b6efd9" stroke-width="0.9"/></svg>
<div class="a t lnk bld" style="left:293.50px;top:499.00px;font-size:9.9px;line-height:9.9px;">rabbitmq-chop-1</div>
<div class="t" style="left:293.50px;top:516.00px;font-size:8.4px;line-height:8.4px;color:#3c3c42;letter-spacing:0.02px">a45e050d70e0</div>
<svg style="left:356.0px;top:517.05px" width="7" height="7" viewBox="0 0 7 7"><rect x="1.8" y="1.6" width="4.6" height="5" rx="0.6" fill="none" stroke="#7b7b82" stroke-width="0.9"/><path d="M0.5 5.2 V1 Q0.5 0.4 1.1 0.4 H4.4" fill="none" stroke="#7b7b82" stroke-width="0.9"/></svg>
<div class="a t lnk" style="left:552.00px;top:509.00px;font-size:9.76px;line-height:9.76px;letter-spacing:0.085px;width:296px;overflow:hidden">cr.yandex/crp9t9tcd2mq4pdn52fm/rabbitmq:4-management-alpine</div>
<div class="t" style="left:852.80px;top:509.00px;font-size:9.66px;line-height:9.66px;color:#45454c">Running</div>
<div class="t" style="left:1056.20px;top:509.00px;font-size:9.66px;line-height:9.66px;color:#5e5e65;transform:scaleX(0.86);transform-origin:0 0">0%</div>
<div class="t" style="left:1079.50px;top:509.00px;font-size:9.66px;line-height:9.66px;color:#45454c">9 seconds ago</div>
<div class="a" style="left:1165.2px;top:511.05px;width:5.6px;height:5.6px;background:#66667a;border-radius:0.5px"></div>
<svg style="left:1193.6px;top:509.65px" width="2" height="9" viewBox="0 0 2 9"><circle cx="1" cy="1" r="0.75" fill="#707082"/><circle cx="1" cy="4.5" r="0.75" fill="#707082"/><circle cx="1" cy="8" r="0.75" fill="#707082"/></svg>
<div class="a" style="left:1216.5px;top:503.85px;width:1px;height:20px;background:#f2f2f4"></div>
<svg style="left:1235px;top:509.45px" width="6.5" height="8" viewBox="0 0 6.5 8"><rect x="0" y="0.6" width="6.5" height="1" fill="#5c5c70"/><rect x="2.2" y="0" width="2.1" height="1" fill="#5c5c70"/><path d="M0.6 2 H5.9 L5.5 8 H1 Z" fill="#5c5c70"/></svg>
<div class="a" style="left:910.2px;top:319.9px;width:45.3px;height:30.8px;border:3px solid #d4393a;border-radius:4px"></div>
</div></body></html>
